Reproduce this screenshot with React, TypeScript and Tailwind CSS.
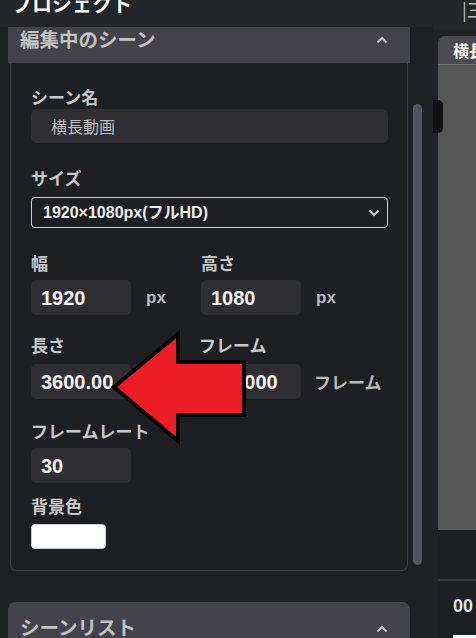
import React from 'react'

const jp = { fontFamily: '"Noto Sans CJK JP", "Noto Sans", sans-serif' }
const num = { fontFamily: '"Liberation Sans", "Noto Sans CJK JP", sans-serif' }

function Label({ children, className = '' }: { children: React.ReactNode; className?: string }) {
  return (
    <div className={`text-[17px] leading-[20px] font-bold text-[#c8c8c8] whitespace-nowrap ${className}`} style={jp}>
      {children}
    </div>
  )
}

function NumBox({ value }: { value: string }) {
  return (
    <div
      className="w-[100px] h-[35px] rounded-[5px] bg-[#2e2e33] pl-[10px] flex items-center text-[20px] font-bold text-[#f2f2f2]"
      style={num}
    >
      {value}
    </div>
  )
}

function Unit({ children }: { children: React.ReactNode }) {
  return (
    <span className="ml-[15px] text-[17px] font-bold text-[#b9b9b9]" style={num}>
      {children}
    </span>
  )
}

function Chevron({ className = '' }: { className?: string }) {
  return (
    <svg width="12" height="8" viewBox="0 0 12 8" className={className}>
      <path d="M1.5 6.5 L6 2 L10.5 6.5" fill="none" stroke="#c8c8c8" strokeWidth="2" />
    </svg>
  )
}

export default function App() {
  return (
    <div className="relative w-[476px] h-[638px] overflow-hidden flex bg-[#1f2024]" style={jp}>
      {/* left column */}
      <div className="w-[433px] flex flex-col">
        <header className="h-[27px] shrink-0 bg-[#25262a] pl-3 overflow-hidden">
          <div className="-mt-[9px] text-[20px] leading-[26px] font-bold text-white whitespace-nowrap">プロジェクト</div>
        </header>

        <div className="flex">
          <div className="w-[412px] pl-2 pr-[2px]">
            {/* 編集中のシーン */}
            <div className="h-[36px] bg-[#444349] flex items-start justify-between pl-[12px] pr-[22px]">
              <span className="text-[19.5px] leading-[24px] font-bold text-[#c2c2c2]">編集中のシーン</span>
              <Chevron className="mt-[9px]" />
            </div>
            <div className="mx-[2px] bg-[#1e1f23] border border-t-0 border-[#3c3d42] rounded-b-[6px] pl-[20px] pr-[19px] pt-[24px] pb-[21px]">
              <Label>シーン名</Label>
              <div className="mt-[2px] h-[34px] rounded-[6px] bg-[#2e2e33] pl-[20px] flex items-center text-[16px] text-[#bdbdbd]">
                横長動画
              </div>

              <Label className="mt-[25px]">サイズ</Label>
              <div className="mt-[9px] h-[31px] rounded-[4px] border-[1.5px] border-[#cfcfcf] bg-[#1e1f23] pl-[11px] pr-[7px] flex items-center justify-between">
                <span className="text-[16px] font-bold text-[#eeeeee]" style={num}>
                  1920×1080px(フルHD)
                </span>
                <Chevron className="rotate-180" />
              </div>

              <div className="mt-[25px] flex">
                <div className="w-[170px]">
                  <Label>幅</Label>
                  <div className="mt-[7px] flex items-center">
                    <NumBox value="1920" />
                    <Unit>px</Unit>
                  </div>
                </div>
                <div>
                  <Label>高さ</Label>
                  <div className="mt-[7px] flex items-center">
                    <NumBox value="1080" />
                    <Unit>px</Unit>
                  </div>
                </div>
              </div>

              <div className="mt-[20px] flex">
                <div className="w-[170px]">
                  <Label>長さ</Label>
                  <div className="mt-[9px] flex items-center">
                    <NumBox value="3600.00" />
                  </div>
                </div>
                <div>
                  <Label className="-ml-[2px]">フレーム</Label>
                  <div className="mt-[9px] flex items-center">
                    <NumBox value="108000" />
                    <span className="ml-[13px] text-[17px] font-bold text-[#b9b9b9]">フレーム</span>
                  </div>
                </div>
              </div>

              <Label className="mt-[22px]">フレームレート</Label>
              <div className="mt-[7px]">
                <NumBox value="30" />
              </div>

              <Label className="mt-[13px]">背景色</Label>
              <div className="mt-[8px] w-[75px] h-[25px] rounded-[4px] bg-white border border-[#d0d0d0]" />
            </div>

            {/* シーンリスト */}
            <div className="mt-[31px] h-[40px] rounded-t-[8px] bg-[#444349] flex items-start justify-between pl-[12px] pr-[22px] pt-[13px]">
              <span className="text-[19.5px] leading-[24px] font-bold text-[#c2c2c2]">シーンリスト</span>
              <Chevron className="mt-[10px]" />
            </div>
          </div>

          {/* scrollbar */}
          <div className="w-[21px] pt-[77px] flex justify-start pl-[1px]">
            <div className="w-[9px] h-[461px] rounded-full bg-[#55555f]" />
          </div>
        </div>
      </div>

      {/* right column */}
      <div className="flex-1 min-w-0 flex flex-col bg-[#25262a] overflow-hidden">
        <div className="h-[30px] shrink-0 bg-[#25262a] flex items-start pl-[29px] -mt-[1px] whitespace-nowrap">
          <span className="text-[18px] leading-[20px] text-[#bdbdbd]">|三</span>
        </div>
        <div className="flex-1 flex flex-col pl-[5px] bg-[#222327]">
          <div className="mt-[7px] h-[494px] rounded-tl-[8px] bg-[#575757] overflow-hidden flex flex-col">
            <div className="h-[29px] bg-[#4b4b50] border-b border-[#707070] pl-[15px] flex items-center whitespace-nowrap">
              <span className="text-[16px] font-bold text-white">横長</span>
            </div>
          </div>
          <div className="h-[49px] bg-[#1e1f23]" />
          <div className="h-[2px] bg-[#3a3b40]" />
          <div className="flex-1 bg-[#1e1f23] pl-[15px] pt-[14px] flex flex-col">
            <span className="text-[18px] leading-[22px] font-bold text-[#d6e6f2]" style={num}>00</span>
            <div className="mt-auto h-[3px] bg-white" />
          </div>
        </div>
      </div>

      {/* drag handle */}
      <div className="absolute left-[433px] top-[100px] w-[10px] h-[33px] rounded-r-[5px] bg-[#111111]" />

      {/* red arrow annotation */}
      <svg className="absolute left-0 top-0" width="476" height="638" viewBox="0 0 476 638">
        <polygon
          points="114,387 178,334 178,362 244,362 244,415 178,415 178,441"
          fill="#ee1c24"
          stroke="#000000"
          strokeWidth="4"
          strokeLinejoin="miter"
        />
      </svg>
    </div>
  )
}
